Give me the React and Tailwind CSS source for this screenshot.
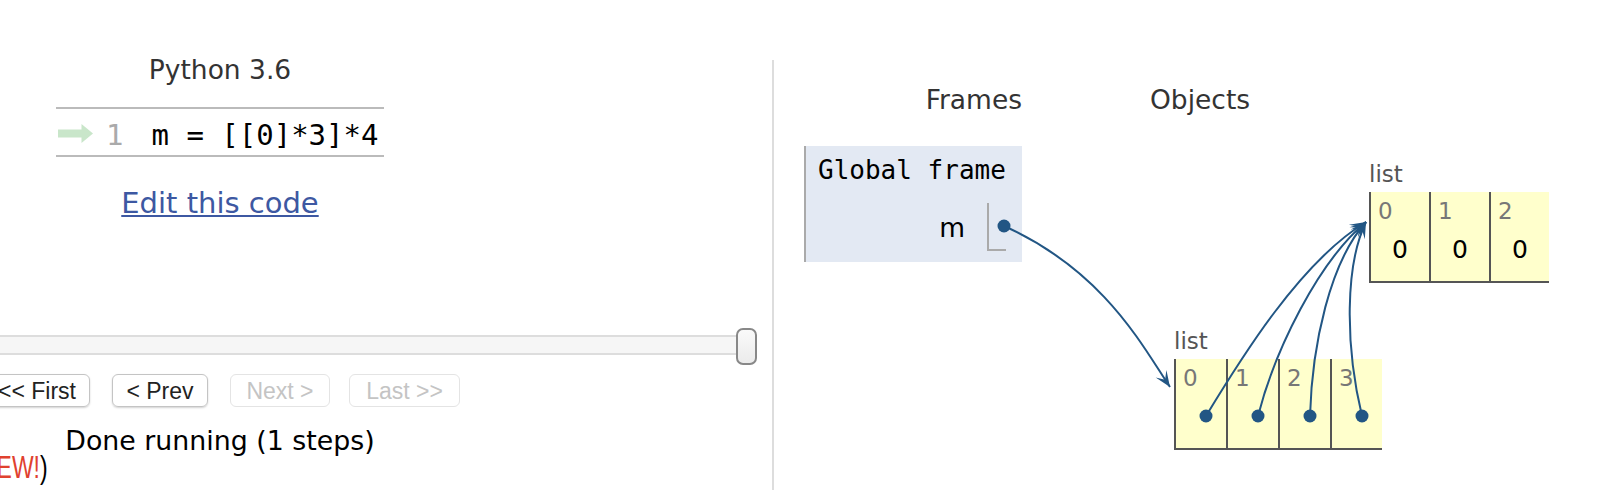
import React from 'react';

const LINK = '#225684';

// connectors drawn over the page, in page coordinates
const CONNECTORS = [
  { d: 'M1004,226 C1104,271 1142,345.5 1170,387', tip: [1170, 387], dir: [28, 41.5] },
  { d: 'M1206,416 C1240,360 1300,262 1366,222', tip: [1366, 222], dir: [66, -40] },
  { d: 'M1258,416 C1275,350 1318,262 1366,222', tip: [1366, 222], dir: [48, -40] },
  { d: 'M1310,416 C1312,345 1330,262 1366,222', tip: [1366, 222], dir: [36, -40] },
  { d: 'M1362,416 C1345,345 1345,265 1366,222', tip: [1366, 222], dir: [21, -43] },
];

const DOTS = [
  [1004, 226],
  [1206, 416],
  [1258, 416],
  [1310, 416],
  [1362, 416],
];

const arrowHead = (tip, dir, len = 16, width = 13, foldback = 0.55) => {
  const m = Math.hypot(dir[0], dir[1]);
  const dx = dir[0] / m;
  const dy = dir[1] / m;
  const nx = -dy;
  const ny = dx;
  const bx = tip[0] - dx * len;
  const by = tip[1] - dy * len;
  const pts = [
    [tip[0], tip[1]],
    [bx + (nx * width) / 2, by + (ny * width) / 2],
    [tip[0] - dx * len * foldback, tip[1] - dy * len * foldback],
    [bx - (nx * width) / 2, by - (ny * width) / 2],
  ];
  return pts.map((p) => p.map((v) => v.toFixed(1)).join(',')).join(' ');
};

const Btn = ({ label, disabled, className }) => (
  <div
    className={`flex h-[33px] items-center justify-center rounded-[6px] border-[1.5px] pt-[2px] font-['Liberation_Sans',Arial,sans-serif] text-[23px] leading-none ${
      disabled
        ? 'border-[#e4e4e4] text-[#c4c4c4]'
        : 'border-[#c4c4c4] text-[#222] shadow-[0_1px_2px_rgba(0,0,0,0.18)]'
    } ${className}`}
  >
    {label}
  </div>
);

const ListNode = ({ cells, cellW, className }) => (
  <div className={`absolute ${className}`}>
    <div className="text-[23px] leading-none text-[#555]">list</div>
    <div className="mt-[6px] flex">
      {cells.map((c, i) => (
        <div key={i} className={`h-[91px] ${cellW} border-b-2 border-l-2 border-[#555] bg-[#ffffcc]`}>
          <div className="pl-[7px] pt-[8px] text-[23px] leading-none text-[#777]">{i}</div>
          {c !== null && <div className="mt-[14px] text-center text-[25px] leading-none">{c}</div>}
        </div>
      ))}
    </div>
  </div>
);

const LeftPane = () => (
  <div className="w-[772px] shrink-0 overflow-hidden">
    <div className="ml-[-330px] flex w-[1100px] flex-col items-center">
      <div className="mt-[57px] text-[26.5px] leading-none text-[#333]">Python 3.6</div>

      {/* code listing */}
      <div className="mt-[23px] w-[328px] border-y-2 border-[#bbb]">
        <div className="flex h-[46px] items-start pl-[2px] font-['DejaVu_Sans_Mono',monospace] text-[29px] leading-none">
          <svg className="mt-[15px]" width="35" height="19" viewBox="0 0 35 19">
            <path d="M0 5.5H23.5V0L35 9.5L23.5 19V13.5H0Z" fill="#c9e6ca" />
          </svg>
          <span className="ml-[13px] mt-[12px] text-[#aaa]">1</span>
          <span className="ml-[28px] mt-[12px] whitespace-pre">m = [[0]*3]*4</span>
        </div>
      </div>

      <a href="#" className="mt-[32px] text-[29px] leading-none text-[#3d58a2] underline">
        Edit this code
      </a>

      {/* step slider */}
      <div className="relative mt-[117px] h-[20px] w-[1074px]">
        <div className="h-[20px] w-[1063px] rounded-[4px] border-2 border-[#ddd] bg-[#f6f6f6]" />
        <div className="absolute right-0 top-[-7px] h-[37px] w-[21px] rounded-[7px] border-2 border-[#888] bg-gradient-to-b from-[#fafafa] to-[#ebebeb]" />
      </div>

      <div className="ml-[314px] mt-[19px] flex self-start">
        <Btn label={'<< First'} className="w-[106px]" />
        <Btn label={'< Prev'} className="ml-[22px] w-[96px]" />
        <Btn label={'Next >'} disabled className="ml-[22px] w-[100px]" />
        <Btn label={'Last >>'} disabled className="ml-[19px] w-[111px]" />
      </div>

      <div className="mt-[21px] text-[26.8px] leading-none">Done running (1 steps)</div>

      <div className="mt-[-2px] w-[378px] self-start text-right">
        <span className="inline-block origin-right scale-x-[0.74] whitespace-nowrap font-['Liberation_Sans',sans-serif] text-[31px] leading-none">
          (<span className="text-[#e0412f]">NEW!</span>)
        </span>
      </div>
    </div>
  </div>
);

const RightPane = () => (
  <div className="relative flex flex-1">
    <div className="ml-[30px] flex w-[218px] shrink-0 flex-col">
      <div className="mt-[87px] text-right text-[26.5px] leading-none text-[#333]">Frames</div>
      <div className="mt-[32.5px] flex h-[116px] flex-col border-l-2 border-[#aaa] bg-[#e3e9f3]">
        <div className="pl-[12px] pt-[11px] font-['DejaVu_Sans_Mono',monospace] text-[26px] leading-none">
          Global frame
        </div>
        <div className="mt-[20px] flex justify-end pr-[16px]">
          <span className="mr-[22px] mt-[12px] text-[26.5px] leading-none">m</span>
          <div className="h-[48px] w-[19px] border-b-2 border-l-2 border-[#aaa]" />
        </div>
      </div>
    </div>

    <div className="relative ml-[128px] flex-1">
      <div className="mt-[87px] text-[26.5px] leading-none text-[#333]">Objects</div>
      <ListNode cells={[0, 0, 0]} cellW="w-[60px]" className="left-[219px] top-[163px]" />
      <ListNode cells={[null, null, null, null]} cellW="w-[52px]" className="left-[24px] top-[330px]" />
    </div>
  </div>
);

export default function App() {
  return (
    <div className="relative flex h-[490px] w-[1616px] overflow-hidden bg-white font-['DejaVu_Sans',Verdana,sans-serif] text-black">
      <LeftPane />
      <div className="mt-[60px] w-[2px] shrink-0 self-stretch bg-[#ddd]" />
      <RightPane />

      <svg className="pointer-events-none absolute left-0 top-0" width="1616" height="490">
        {CONNECTORS.map((c, i) => (
          <g key={i}>
            <path d={c.d} fill="none" stroke={LINK} strokeWidth="2" />
            <polygon points={arrowHead(c.tip, c.dir)} fill={LINK} />
          </g>
        ))}
        {DOTS.map(([x, y], i) => (
          <circle key={i} cx={x} cy={y} r="6.5" fill={LINK} />
        ))}
      </svg>
    </div>
  );
}
